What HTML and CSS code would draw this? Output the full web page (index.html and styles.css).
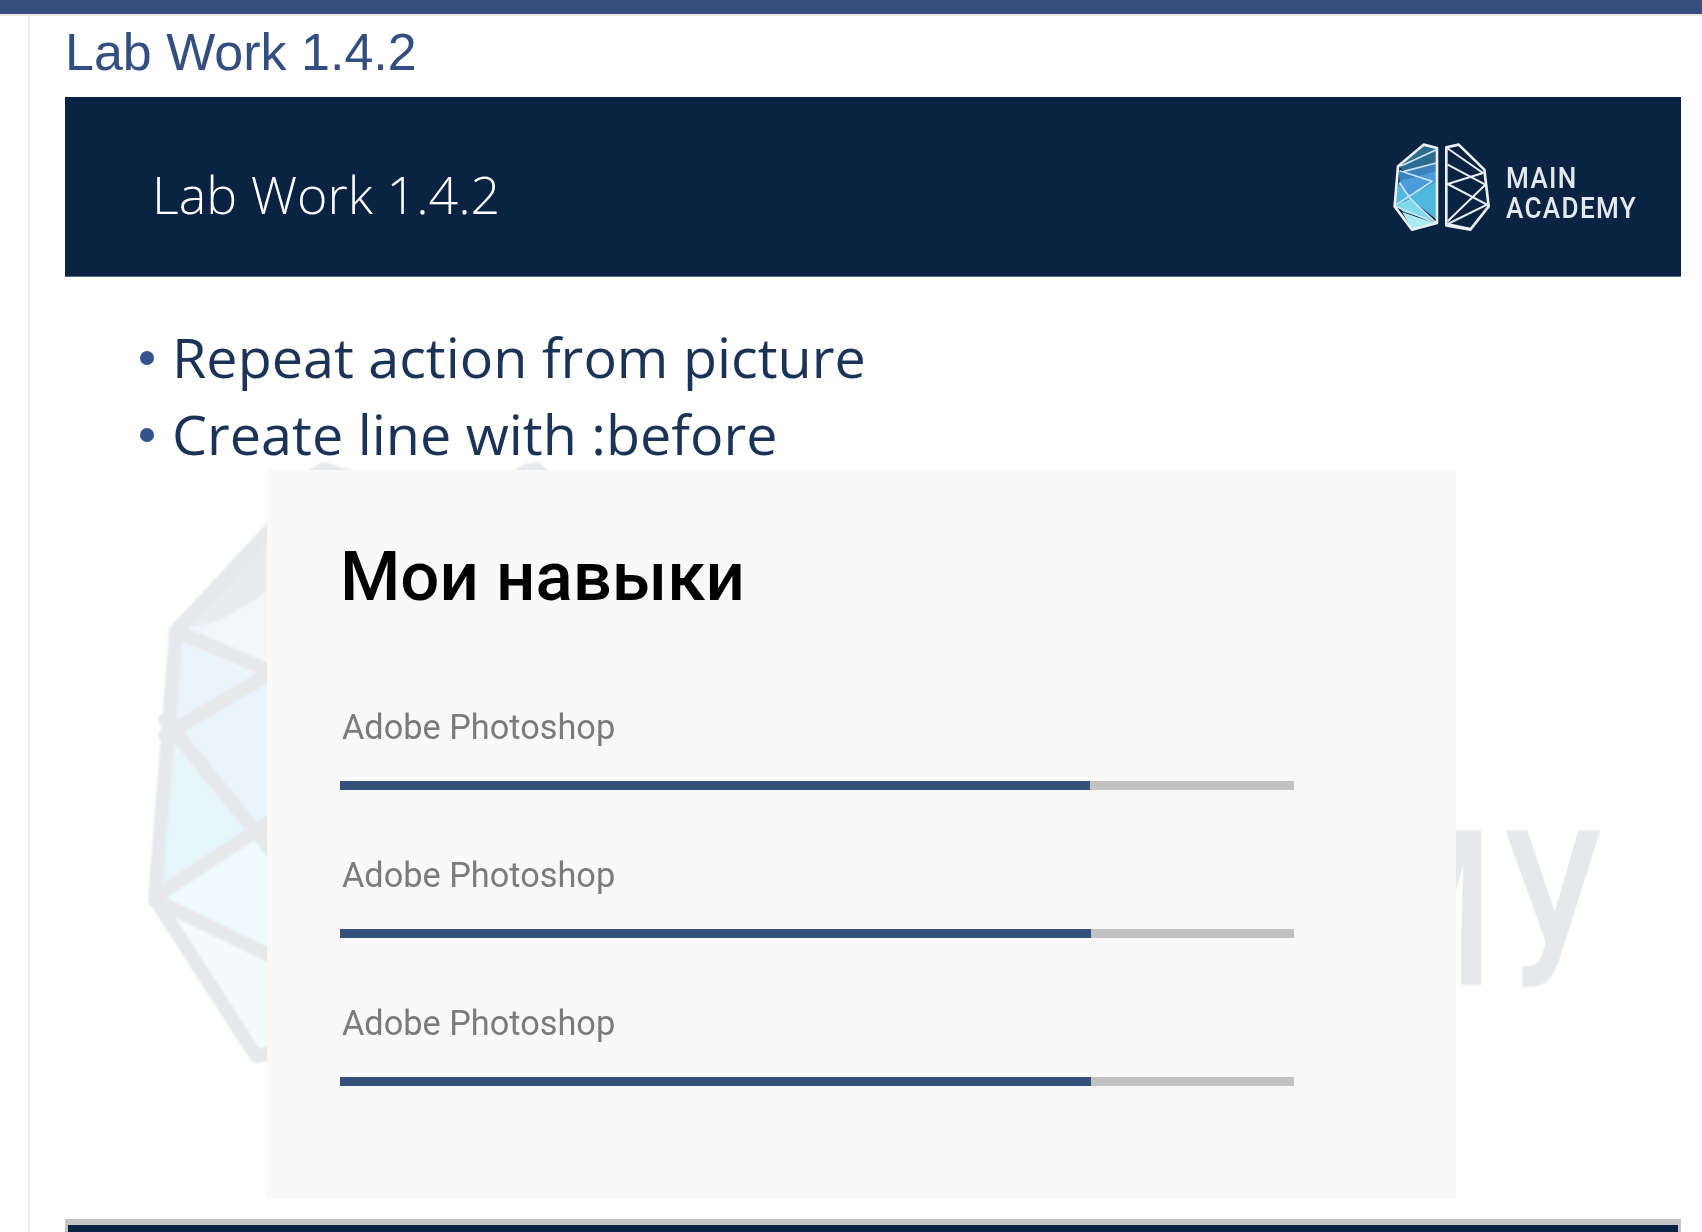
FILE: index.html
```html
<!DOCTYPE html>
<html lang="en">
<head>
<meta charset="utf-8">
<title>Lab Work 1.4.2</title>
<link rel="stylesheet" href="styles.css">
</head>
<body>
<div class="topbar"></div>
<main class="page">
  <h1 class="page-title">Lab Work 1.4.2</h1>
  <section class="slide">
    <header class="banner">
      <h2 class="banner-title">Lab Work 1.4.2</h2>
      <div class="logo">
        <svg class="logo-mark" viewBox="98 62 294 270" aria-hidden="true">
          <polygon fill="#2b6b90" points="190,72 229,82 229,125 130,150 115,135"/>
          <polygon fill="#3a82bd" points="115,148 130,150 229,125 229,150 150,178 118,178"/>
          <polygon fill="#4b9cdc" points="118,178 229,150 229,180 150,218 112,190"/>
          <polygon fill="#4fb9dd" points="112,190 150,218 229,180 229,295 150,232 106,252"/>
          <polygon fill="#7fdbe9" points="106,252 150,232 222,300 130,272"/>
          <polygon fill="#aeeaf3" points="125,272 222,305 155,323"/>
          <g fill="none" stroke="#cfe4ee" stroke-width="5" stroke-linejoin="round">
            <polyline points="228,85 130,130 115,135"/>
            <polyline points="130,150 228,125"/>
            <polyline points="118,148 215,180 108,250"/>
            <polyline points="118,185 150,232 228,305"/>
            <polyline points="106,255 225,305"/>
          </g>
          <g fill="none" stroke="#e9eff3" stroke-width="8" stroke-linejoin="round">
            <polygon points="190,70 230,80 230,305 155,325 103,255 113,135"/>
            <polygon points="258,78 295,70 372,145 385,255 330,325 258,312"/>
          </g>
          <g fill="none" stroke="#e9eff3" stroke-width="6" stroke-linejoin="round">
            <polyline points="260,80 368,155 262,188 380,250 262,308"/>
            <polyline points="262,130 375,190 262,300"/>
            <polyline points="262,308 330,322"/>
          </g>
        </svg>
        <div class="logo-text"><span>MAIN</span><span>ACADEMY</span></div>
      </div>
    </header>

    <div class="slide-body">
      <svg class="watermark" viewBox="0 0 500 800" aria-hidden="true">
        <g transform="translate(-65 -277)">
          <polygon fill="#e9ecef" points="267,523 170,627 202,636 267,592"/>
          <polygon fill="#edf6fa" points="176,631 300,600 300,1050 256,1056 155,899"/>
          <polygon fill="#f4f6f8" points="195,634 300,575 300,680"/>
          <polygon fill="#e9f3f9" points="176,636 255,680 165,730"/>
          <polygon fill="#e8f4fa" points="165,735 300,660 300,860 250,835"/>
          <polygon fill="#e6f5fa" points="165,725 250,835 155,895"/>
          <polygon fill="#eefafc" points="155,895 255,825 300,860 300,965"/>
          <polygon fill="#f3fbfd" points="155,900 300,965 300,1050 255,1056"/>
          <g fill="none" stroke="#e6e9ec" stroke-width="14" stroke-linejoin="round" stroke-linecap="round">
            <polyline points="322,470 273,527 176,631 155,899 256,1056 300,1048"/>
            <polyline points="176,631 300,684"/>
            <polyline points="165,735 300,656"/>
            <polyline points="165,720 300,886"/>
            <polyline points="158,895 300,802"/>
            <polyline points="155,900 300,970"/>
          </g>
          <polygon fill="#e6e9ec" points="305,472 323,462 358,472"/>
          <polygon fill="#e6e9ec" points="512,472 525,464 538,462 550,472"/>
        </g>
      </svg>
      <div class="watermark-word">ACADEMУ</div>

      <ul class="points">
        <li>Repeat action from picture</li>
        <li>Create line with :before</li>
      </ul>

      <article class="card">
        <h3 class="card-title">Мои навыки</h3>
        <div class="skill">
          <div class="skill-name">Adobe Photoshop</div>
          <div class="track"><div class="fill" style="width:750px"></div></div>
        </div>
        <div class="skill">
          <div class="skill-name">Adobe Photoshop</div>
          <div class="track"><div class="fill" style="width:751px"></div></div>
        </div>
        <div class="skill">
          <div class="skill-name">Adobe Photoshop</div>
          <div class="track"><div class="fill" style="width:751px"></div></div>
        </div>
      </article>
    </div>
  </section>
  <div class="next-slide"></div>
</main>
</body>
</html>
```

FILE: styles.css
```css
* { box-sizing: border-box; }

html, body {
  margin: 0;
  height: 1232px;
  overflow: hidden;
  background: #fff;
}

.topbar {
  height: 16px;
  background: #364f7f;
  border-bottom: 2px solid #e8e8e8;
}

.page {
  margin-left: 28px;
  height: 1216px;
  padding: 0 21px 0 35px;
  border-left: 2px solid #eeeeee;
  display: flex;
  flex-direction: column;
}

.page-title {
  flex: none;
  margin: 0;
  height: 81px;
  font: 400 52px/72px "Liberation Sans", Arial, sans-serif;
  color: #334f82;
}

.slide {
  flex: none;
  display: flex;
  flex-direction: column;
}

.banner {
  height: 180px;
  padding: 0 47px 0 87px;
  display: flex;
  align-items: center;
  justify-content: space-between;
  background: #0a2342;
  border-bottom: 1px solid #5b6d88;
}

.banner-title {
  margin: 15px 0 0;
  font: 300 52px/1 "Open Sans", sans-serif;
  color: #fff;
  filter: blur(0.5px);
}

.logo {
  display: flex;
  align-items: center;
  gap: 15px;
  filter: blur(0.5px);
}

.logo-mark {
  display: block;
  width: 98px;
  height: 90px;
}

.logo-text {
  display: flex;
  flex-direction: column;
  width: 128px;
  margin-top: 12px;
  white-space: nowrap;
  font: 500 29px/30px Roboto, sans-serif;
  letter-spacing: 1.5px;
  color: #e4e9ee;
  transform: scaleX(0.9);
  transform-origin: left center;
}

.slide-body {
  position: relative;
  height: 942px;
  padding-top: 41px;
}

.watermark {
  position: absolute;
  left: 0;
  top: 0;
  width: 500px;
  height: 800px;
  filter: blur(0.8px);
}

.watermark-word {
  position: absolute;
  right: 69px;
  top: 525px;
  font: 500 218px/1 Roboto, sans-serif;
  letter-spacing: 12px;
  color: #e6e9ec;
  transform: scaleX(0.74);
  transform-origin: right center;
  white-space: nowrap;
  filter: blur(0.8px);
}

.points {
  position: relative;
  margin: 0;
  padding: 0 0 0 107px;
  list-style: none;
  font: 400 55.7px/77px "Open Sans", sans-serif;
  color: #1b3357;
}

.points li {
  position: relative;
}

.points li::before {
  content: "";
  position: absolute;
  left: -32px;
  top: 33px;
  width: 14px;
  height: 14px;
  border-radius: 50%;
  background: #33538c;
}

.card {
  position: relative;
  margin: -2px 0 0 202px;
  width: 1189px;
  height: 729px;
  padding: 66px 0 0 73px;
  background: #f9f9f9;
}

.card-title {
  margin: 0 0 88px;
  font: 500 69px/1.2 Roboto, sans-serif;
  color: #000;
}

.skill {
  margin-bottom: 65px;
  filter: blur(0.3px);
}

.skill-name {
  margin-left: 2px;
  font: 400 34.3px/40px Roboto, sans-serif;
  color: #7b7b7b;
}

.track {
  width: 954px;
  height: 9px;
  margin-top: 34px;
  background: #c2c2c2;
}

.fill {
  height: 100%;
  background: #36507c;
}

.next-slide {
  flex: none;
  height: 13px;
  background: #0a2342;
  border: 3px solid #c4c4c4;
  border-top-width: 6px;
  border-bottom: 0;
}
```
